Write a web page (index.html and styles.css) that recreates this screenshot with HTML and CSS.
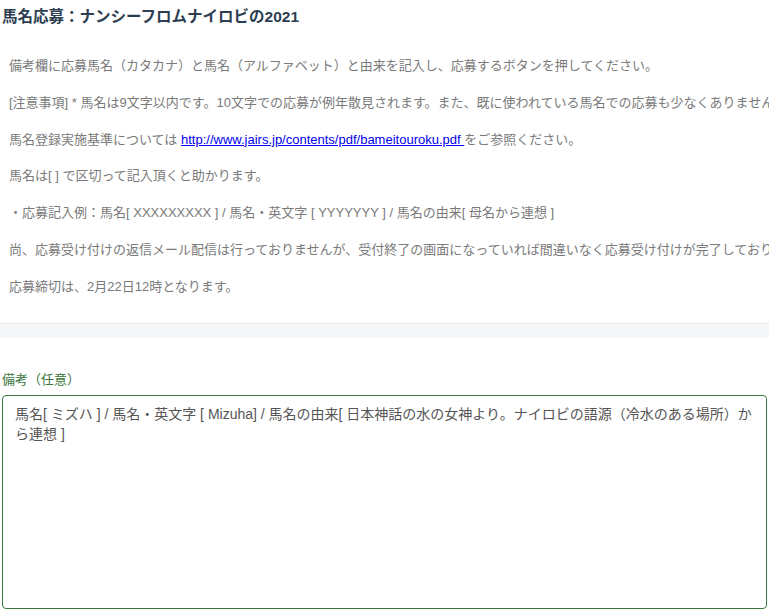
FILE: index.html
```html
<!DOCTYPE html>
<html lang="ja">
<head>
    <meta charset="UTF-8">
    <meta name="viewport" content="width=device-width, initial-scale=1.0">
    <title>馬名応募</title>
    <link rel="stylesheet" href="styles.css">
</head>
<body>
    <h1 class="title">馬名応募：ナンシーフロムナイロビの2021</h1>

    <div class="notes">
        <p>備考欄に応募馬名（カタカナ）と馬名（アルファベット）と由来を記入し、応募するボタンを押してください。</p>
        <p>[注意事項] * 馬名は9文字以内です。10文字での応募が例年散見されます。また、既に使われている馬名での応募も少なくありません。</p>
        <p>馬名登録実施基準については <a href="#">http://www.jairs.jp/contents/pdf/bameitouroku.pdf </a>をご参照ください。</p>
        <p>馬名は[ ] で区切って記入頂くと助かります。</p>
        <p>・応募記入例：馬名[ XXXXXXXXX ] / 馬名・英文字 [ YYYYYYY ] / 馬名の由来[ 母名から連想 ]</p>
        <p>尚、応募受け付けの返信メール配信は行っておりませんが、受付終了の画面になっていれば間違いなく応募受け付けが完了しております。</p>
        <p>応募締切は、2月22日12時となります。</p>
    </div>
    <div class="band"></div>

    <form class="entry">
        <label for="remarks">備考（任意）</label>
        <textarea id="remarks" name="remarks">馬名[ ミズハ ] / 馬名・英文字 [ Mizuha] / 馬名の由来[ 日本神話の水の女神より。ナイロビの語源（冷水のある場所）から連想 ]</textarea>
    </form>
</body>
</html>
```

FILE: styles.css
```css
body {
    font-family: "Liberation Sans", "Noto Sans CJK JP", sans-serif;
    margin: 0;
    padding: 0;
    background-color: #fff;
    overflow: hidden;
}
.title {
    font-size: 15.5px;
    line-height: 20px;
    color: #2c3e50;
    margin: 7px 0 0 2px;
}
.notes {
    padding: 28px 0 25px 9px;
    border-bottom: 1px solid #e9e9e9;
}
.notes p {
    font-size: 13px;
    line-height: 22px;
    color: #7a7a7a;
    margin: 0 0 14.8px;
    white-space: nowrap;
}
.notes p:last-child {
    margin-bottom: 0;
}
.notes a {
    color: #0000ee;
}
.band {
    height: 14px;
    background-color: #f6f7f9;
}
.entry {
    display: flex;
    flex-direction: column;
    padding: 33px 2px 0;
}
.entry label {
    font-size: 13px;
    line-height: 18px;
    color: #3c763d;
    margin-bottom: 6px;
}
.entry textarea {
    height: 214px;
    box-sizing: border-box;
    padding: 8px 12px;
    border: 1px solid #3c763d;
    border-radius: 4px;
    font-family: "Liberation Sans", "Noto Sans CJK JP", sans-serif;
    font-size: 14px;
    line-height: 20px;
    color: #555;
    resize: none;
    outline: none;
}
```
